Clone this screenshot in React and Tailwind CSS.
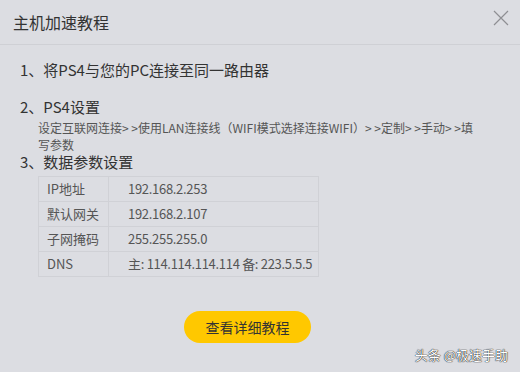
const rows = [
  ['IP地址', '192.168.2.253'],
  ['默认网关', '192.168.2.107'],
  ['子网掩码', '255.255.255.0'],
  ['DNS', '主: 114.114.114.114 备: 223.5.5.5'],
];

export default function App() {
  return (
    <div
      className="relative w-[520px] h-[372px] overflow-hidden bg-[#dcdde2] text-[#333]"
      style={{ fontFamily: '"Microsoft YaHei", "Noto Sans CJK SC", sans-serif' }}
    >
      <div className="flex items-center justify-between h-[45px] pl-[13px] pr-[11px] border-b border-[#cfd0d5]">
        <span className="text-[16px] text-[#333]">主机加速教程</span>
        <svg width="16" height="16" viewBox="0 0 16 16" className="mb-[9px]">
          <path d="M1 1L15 15M15 1L1 15" stroke="#8e8f93" strokeWidth="1.2" />
        </svg>
      </div>

      <div className="pl-[20px] pt-[13px]">
        <p className="text-[15px] leading-[24px]">1、将PS4与您的PC连接至同一路由器</p>
        <p className="text-[15px] leading-[20px] mt-[15px]">2、PS4设置</p>
        <p className="text-[12px] leading-[17px] text-[#555] pl-[18px] pr-[44px] mt-[2px]">
          设定互联网连接&gt; &gt;使用LAN连接线（WIFI模式选择连接WIFI）&gt; &gt;定制&gt; &gt;手动&gt; &gt;填写参数
        </p>
        <p className="text-[15px] leading-[18px] mt-0">3、数据参数设置</p>
        <table className="ml-[18px] mt-[5px] w-[281px] table-fixed border-collapse text-[13px] text-[#555]">
          <tbody>
            {rows.map(([k, v]) => (
              <tr key={k} className="h-[25px]">
                <td className="w-[70px] border border-[#d0d1d6] pl-[8px] whitespace-nowrap">{k}</td>
                <td className="border border-[#d0d1d6] pl-[19px] whitespace-nowrap tracking-[-0.3px]">{v}</td>
              </tr>
            ))}
          </tbody>
        </table>
      </div>

      <div className="flex justify-center mt-[34px] pr-[25px]">
        <button className="w-[127px] h-[32px] rounded-full bg-[#ffc800] text-[14px] text-[#333]">
          查看详细教程
        </button>
      </div>

      <div
        className="absolute right-[12px] bottom-[8px] text-[13px] text-white"
        style={{ textShadow: '0 0 1px #000, 0 0 1px #000' }}
      >
        头条 @极速手助
      </div>
    </div>
  );
}
